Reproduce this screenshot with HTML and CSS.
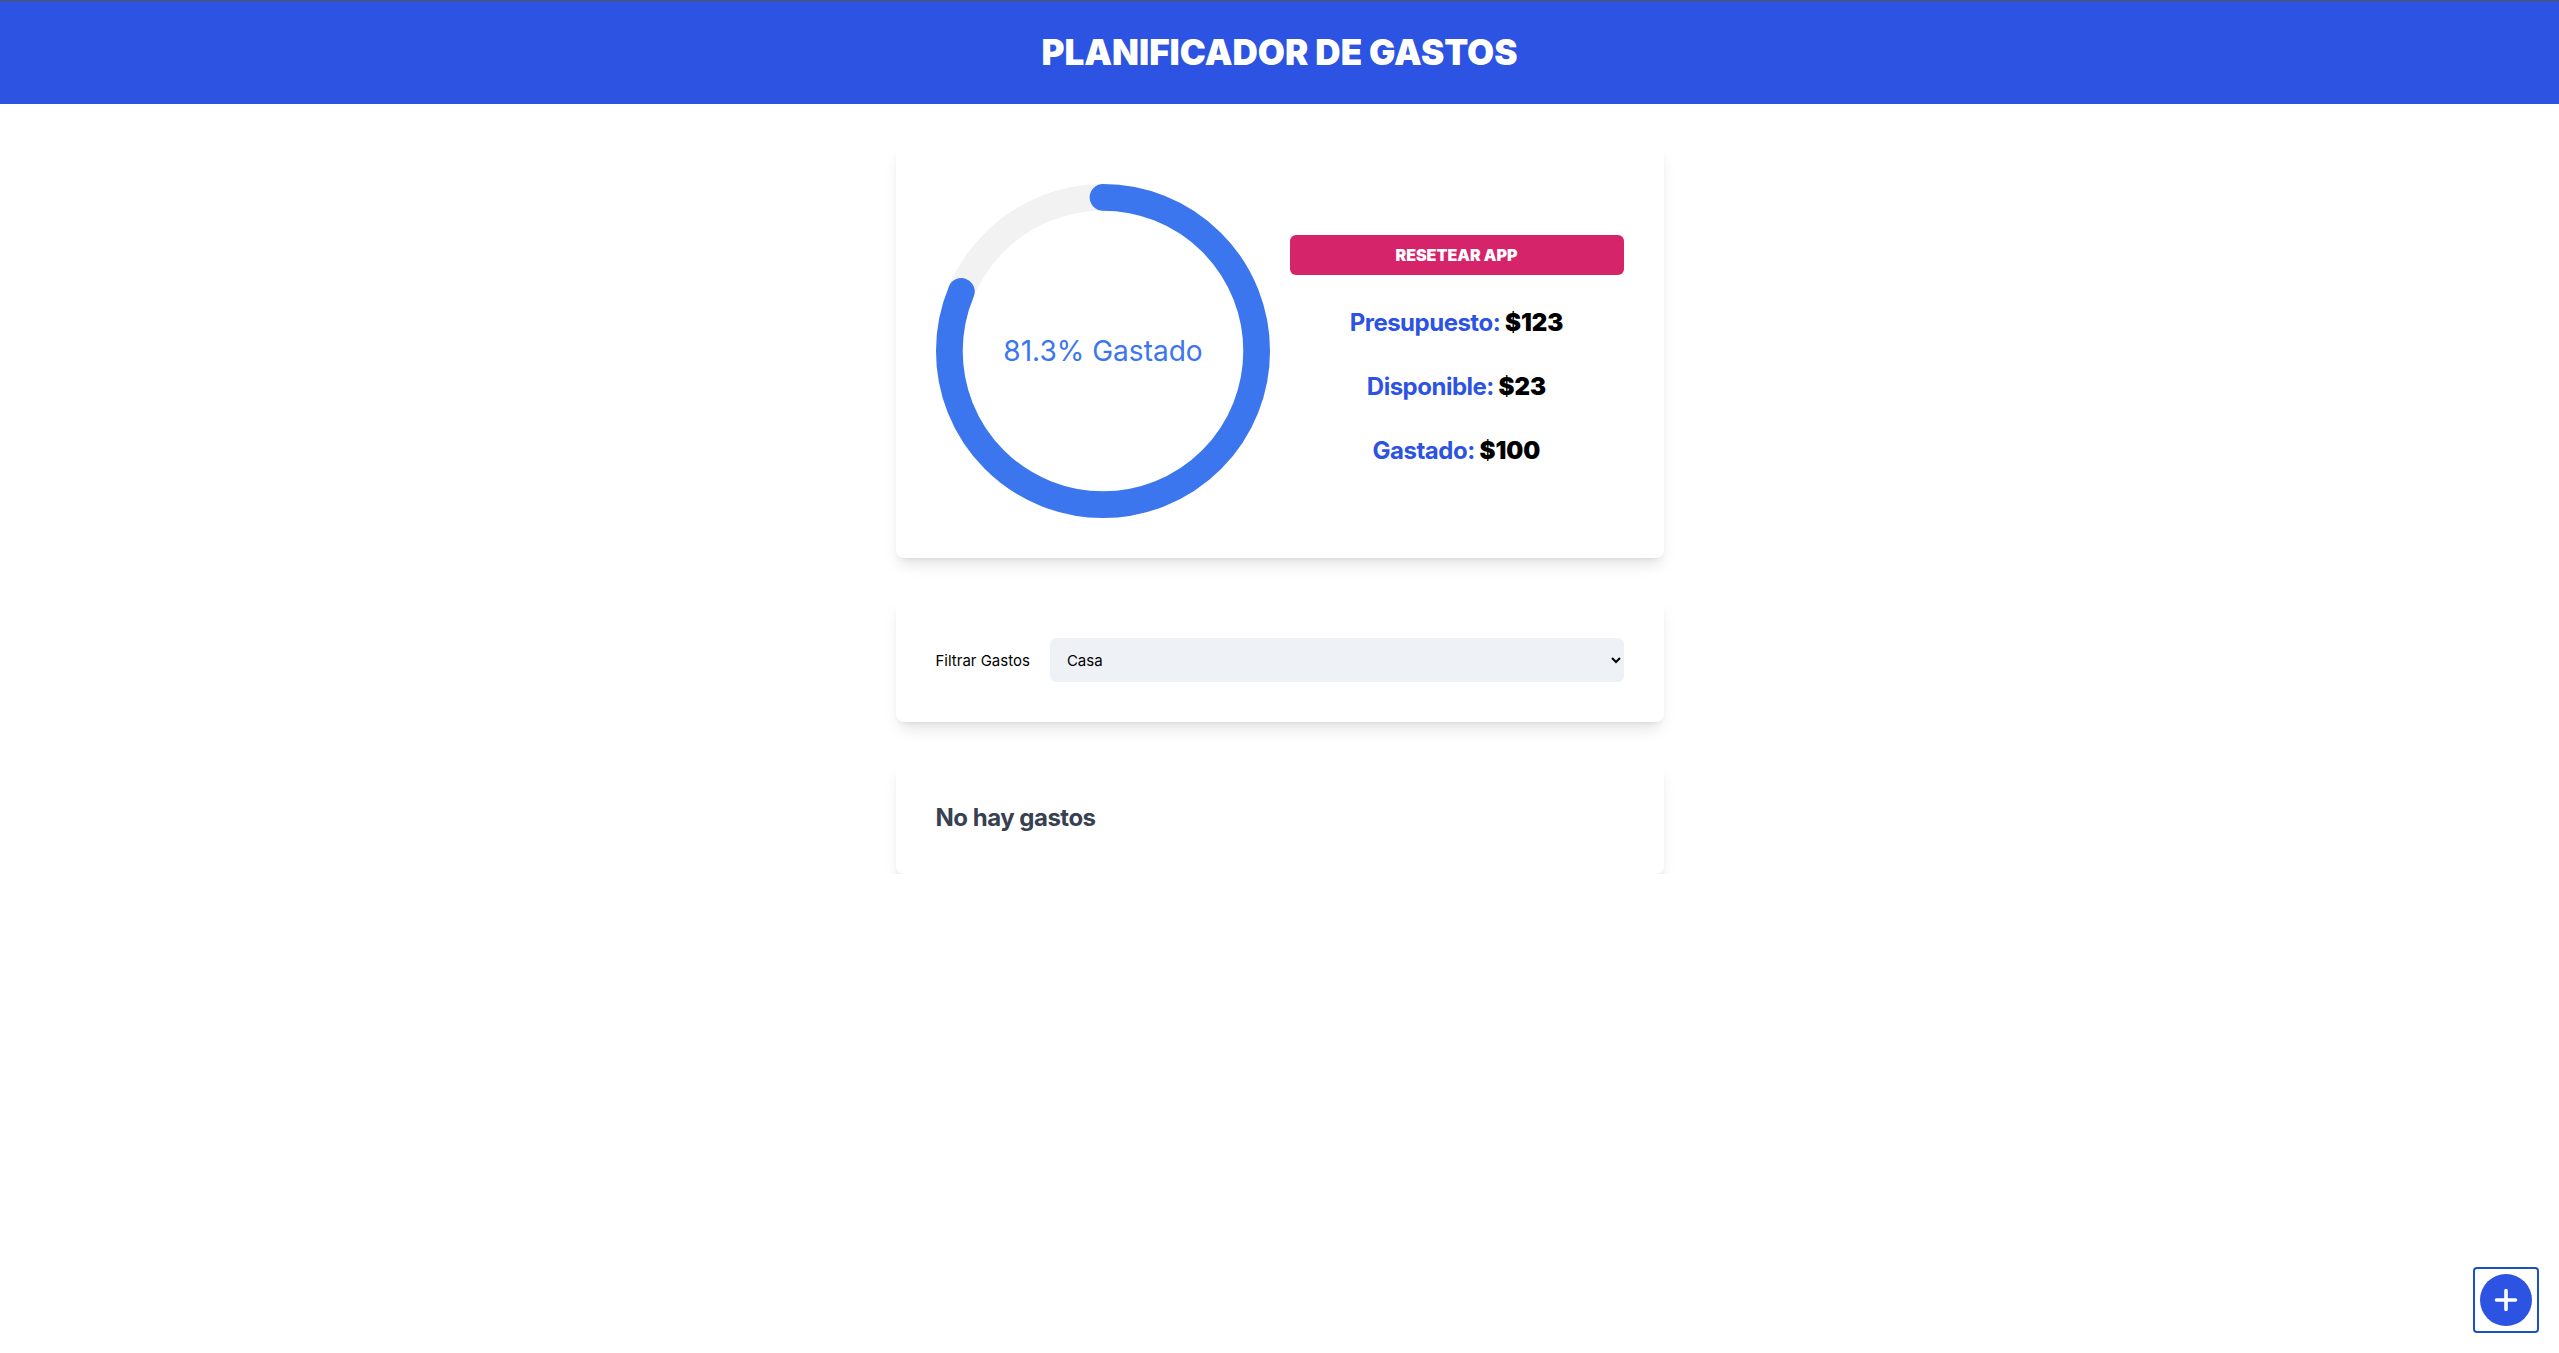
FILE: index.html
```html
<!DOCTYPE html>
<html lang="es">
<head>
<meta charset="utf-8">
<title>Planificador de Gastos</title>
<link rel="stylesheet" href="styles.css">
</head>
<body>
<header class="header">
  <h1 class="title">PLANIFICADOR DE GASTOS</h1>
</header>
<main class="main">
  <section class="card budget">
    <div class="chart">
      <svg class="ring" viewBox="0 0 100 100">
        <circle class="trail" cx="50" cy="50" r="46"></circle>
        <circle class="path" cx="50" cy="50" r="46" stroke-dasharray="234.98 289.03" transform="rotate(-90 50 50)"></circle>
        <text class="ring-text" x="50" y="50">81.3% Gastado</text>
      </svg>
    </div>
    <div class="stats">
      <button class="reset">RESETEAR APP</button>
      <p class="stat"><span class="label">Presupuesto:</span> $123</p>
      <p class="stat"><span class="label">Disponible:</span> $23</p>
      <p class="stat"><span class="label">Gastado:</span> $100</p>
    </div>
  </section>
  <section class="card filter">
    <label class="filter-label" for="cat">Filtrar Gastos</label>
    <select id="cat" class="select">
      <option>Casa</option>
    </select>
  </section>
  <section class="card list">
    <h2 class="empty">No hay gastos</h2>
  </section>
</main>
<div class="fab">
  <svg width="52" height="52" viewBox="0 0 52 52">
    <circle cx="26" cy="26" r="26" fill="#2c53e2"></circle>
    <path d="M26 16.5v19M16.5 26h19" stroke="#fff" stroke-width="3.6" stroke-linecap="round"></path>
  </svg>
</div>
</body>
</html>
```
FILE: styles.css
```css
html, body {
  margin: 0;
  padding: 0;
  background: #fff;
  font-family: Inter, "Noto Sans", "Liberation Sans", sans-serif;
}
.header {
  background: #2c53e2;
  border-top: 1px solid #555;
  padding: 31px 0 32px;
}
.title {
  margin: 0;
  text-align: center;
  color: #fff;
  font-size: 35px;
  line-height: 40px;
  font-weight: 900;
}
.main {
  max-width: 768px;
  margin: 40px auto 0;
  display: flex;
  flex-direction: column;
  gap: 40px;
}
.card {
  background: #fff;
  border-radius: 8px;
  padding: 40px;
  box-shadow: 0 10px 15px -3px rgba(0,0,0,0.1), 0 4px 6px -4px rgba(0,0,0,0.1);
}
.budget {
  display: grid;
  grid-template-columns: 1fr 1fr;
  gap: 20px;
}
.chart {
  display: flex;
}
.ring {
  width: 100%;
  display: block;
}
.trail {
  fill: none;
  stroke: #f2f2f2;
  stroke-width: 8;
}
.path {
  fill: none;
  stroke: #3c76ee;
  stroke-width: 8;
  stroke-linecap: round;
}
.ring-text {
  fill: #3c76ee;
  font-size: 8.4px;
  text-anchor: middle;
  dominant-baseline: central;
  font-family: Inter, "Noto Sans", sans-serif;
}
.stats {
  display: flex;
  flex-direction: column;
  justify-content: center;
  align-items: center;
  gap: 32px;
}
.reset {
  width: 100%;
  height: 40px;
  border: none;
  border-radius: 6px;
  background: #d6246a;
  color: #fff;
  font-family: Inter, sans-serif;
  font-weight: 900;
  font-size: 16px;
}
.stat {
  margin: 0;
  font-size: 24px;
  line-height: 32px;
  font-weight: 900;
  color: #000;
  text-align: center;
}
.label {
  color: #2c53e2;
  font-weight: 700;
  letter-spacing: -0.5px;
}
.filter {
  display: flex;
  align-items: center;
  gap: 20px;
}
.filter-label {
  font-size: 15px;
  color: #000;
}
.select {
  flex: 1;
  height: 44px;
  border: none;
  border-radius: 6px;
  background-color: #eef2f7;
  padding: 0 13px;
  font-family: Inter, sans-serif;
  font-size: 15px;
  color: #000;
}
.empty {
  margin: 0;
  font-size: 24px;
  line-height: 32px;
  font-weight: 700;
  color: #374151;
  letter-spacing: -0.5px;
}
.fab {
  position: fixed;
  right: 20px;
  bottom: 20px;
  padding: 5px;
  border: 2px solid #1a52c4;
  border-radius: 4px;
  display: flex;
}
.fab svg {
  display: block;
}
```
